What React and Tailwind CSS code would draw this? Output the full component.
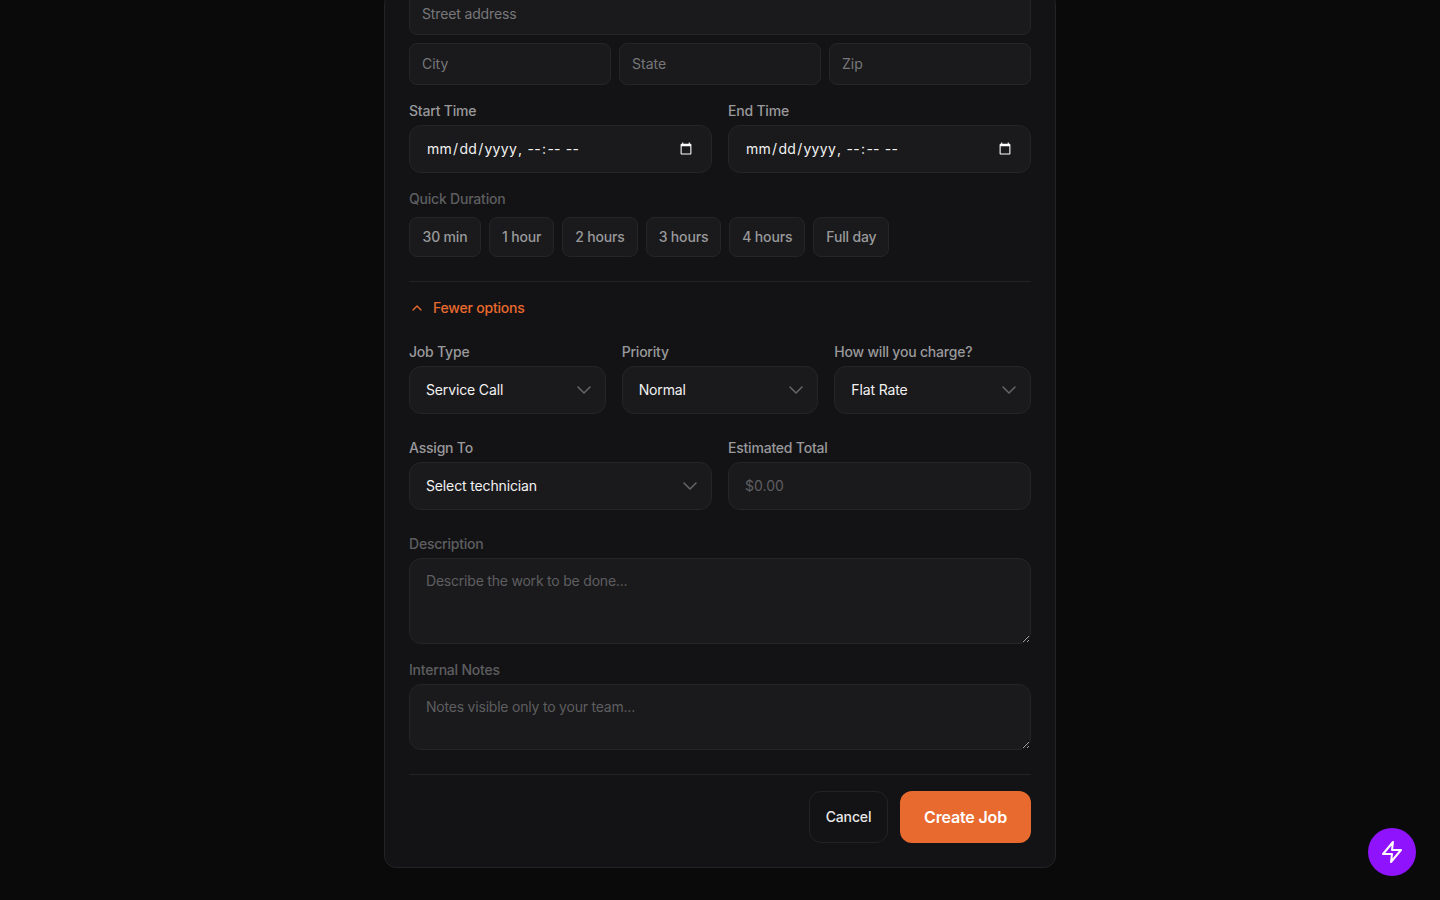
import { ChevronDown, ChevronUp } from "lucide-react";

const durations = ["30 min", "1 hour", "2 hours", "3 hours", "4 hours", "Full day"];

const fieldClass =
  "w-full bg-[#1a1a1c] border border-[#252527] text-sm outline-none";

const Label = ({ children, dim }) => (
  <label
    className={`block h-5 mb-1 text-sm leading-5 font-medium tracking-[-0.015em] ${
      dim ? "text-[#5e5e60]" : "text-[#99999b]"
    }`}
  >
    {children}
  </label>
);

const Select = ({ label, value }) => (
  <div>
    <Label>{label}</Label>
    <div className="relative">
      <select
        defaultValue={value}
        className={`${fieldClass} h-12 px-4 rounded-xl appearance-none text-[#f2f2f2] tracking-[-0.01em]`}
      >
        <option>{value}</option>
      </select>
      <ChevronDown
        size={24}
        strokeWidth={1.5}
        className="absolute right-[10px] top-3 text-[#666668] pointer-events-none"
      />
    </div>
  </div>
);

const DateField = ({ label }) => (
  <div>
    <Label>{label}</Label>
    <input
      type="datetime-local"
      className={`${fieldClass} h-12 px-4 rounded-xl text-[#f2f2f2] tracking-[0.02em] [color-scheme:dark]`}
    />
  </div>
);

const App = () => {
  return (
    <div className="h-screen overflow-hidden bg-[#0a0a0b] flex flex-col justify-end items-center pb-[32px] font-['Inter','Noto_Sans',sans-serif]">
      <div className="w-[672px] shrink-0 bg-[#131315] border border-[#232325] rounded-xl px-6 pb-6">
        <input
          placeholder="Street address"
          className={`${fieldClass} h-[42px] px-3 pb-[2px] rounded-lg placeholder-[#77777a] tracking-[-0.01em]`}
        />
        <div className="grid grid-cols-3 gap-2 mt-2">
          {["City", "State", "Zip"].map((p) => (
            <input
              key={p}
              placeholder={p}
              className={`${fieldClass} h-[42px] px-3 pb-[2px] rounded-lg placeholder-[#77777a]`}
            />
          ))}
        </div>

        <div className="grid grid-cols-2 gap-4 mt-4">
          <DateField label="Start Time" />
          <DateField label="End Time" />
        </div>

        <div className="mt-4">
          <Label dim>Quick Duration</Label>
          <div className="flex gap-2 mt-2">
            {durations.map((d) => (
              <button
                key={d}
                className="h-10 px-3 first:min-w-[72px] bg-[#1a1a1c] border border-[#252527] rounded-lg text-sm font-medium tracking-[-0.012em] text-[#99999b]"
              >
                {d}
              </button>
            ))}
          </div>
        </div>

        <div className="border-t border-[#232325] mt-6 pt-4">
          <button className="flex items-center gap-2 h-5 text-sm font-medium tracking-[-0.015em] text-[#e96a2f]">
            <ChevronUp size={16} />
            Fewer options
          </button>
        </div>

        <div className="grid grid-cols-3 gap-4 mt-6">
          <Select label="Job Type" value="Service Call" />
          <Select label="Priority" value="Normal" />
          <Select label="How will you charge?" value="Flat Rate" />
        </div>

        <div className="grid grid-cols-2 gap-4 mt-6">
          <Select label="Assign To" value="Select technician" />
          <div>
            <Label>Estimated Total</Label>
            <input
              placeholder="$0.00"
              className={`${fieldClass} h-12 px-4 pb-[2px] rounded-xl placeholder-[#5e5e60]`}
            />
          </div>
        </div>

        <div className="mt-6">
          <Label dim>Description</Label>
          <textarea
            placeholder="Describe the work to be done..."
            className={`${fieldClass} block h-[86px] px-4 py-3 rounded-xl placeholder-[#5e5e60] tracking-[-0.015em] [color-scheme:dark]`}
          />
        </div>

        <div className="mt-4">
          <Label dim>Internal Notes</Label>
          <textarea
            placeholder="Notes visible only to your team..."
            className={`${fieldClass} block h-[66px] px-4 py-3 rounded-xl placeholder-[#5e5e60] tracking-[-0.015em] [color-scheme:dark]`}
          />
        </div>

        <div className="border-t border-[#232325] mt-6 pt-4 flex justify-end gap-3">
          <button className="h-[52px] w-[79px] border border-[#232325] rounded-xl text-sm font-medium tracking-[-0.01em] text-[#e8e8e8]">
            Cancel
          </button>
          <button className="h-[52px] w-[131px] bg-[#e96a2f] rounded-xl text-base font-semibold tracking-[-0.01em] text-white">
            Create Job
          </button>
        </div>
      </div>

      <button className="fixed right-6 bottom-6 w-12 h-12 rounded-full bg-[#9013fe] flex items-center justify-center text-white">
        <svg
          width="24"
          height="24"
          viewBox="0 0 24 24"
          fill="none"
          stroke="currentColor"
          strokeWidth="2"
          strokeLinecap="round"
          strokeLinejoin="round"
        >
          <polygon points="13 2 3 14 12 14 11 22 21 10 12 10 13 2" />
        </svg>
      </button>
    </div>
  );
};

export default App;
